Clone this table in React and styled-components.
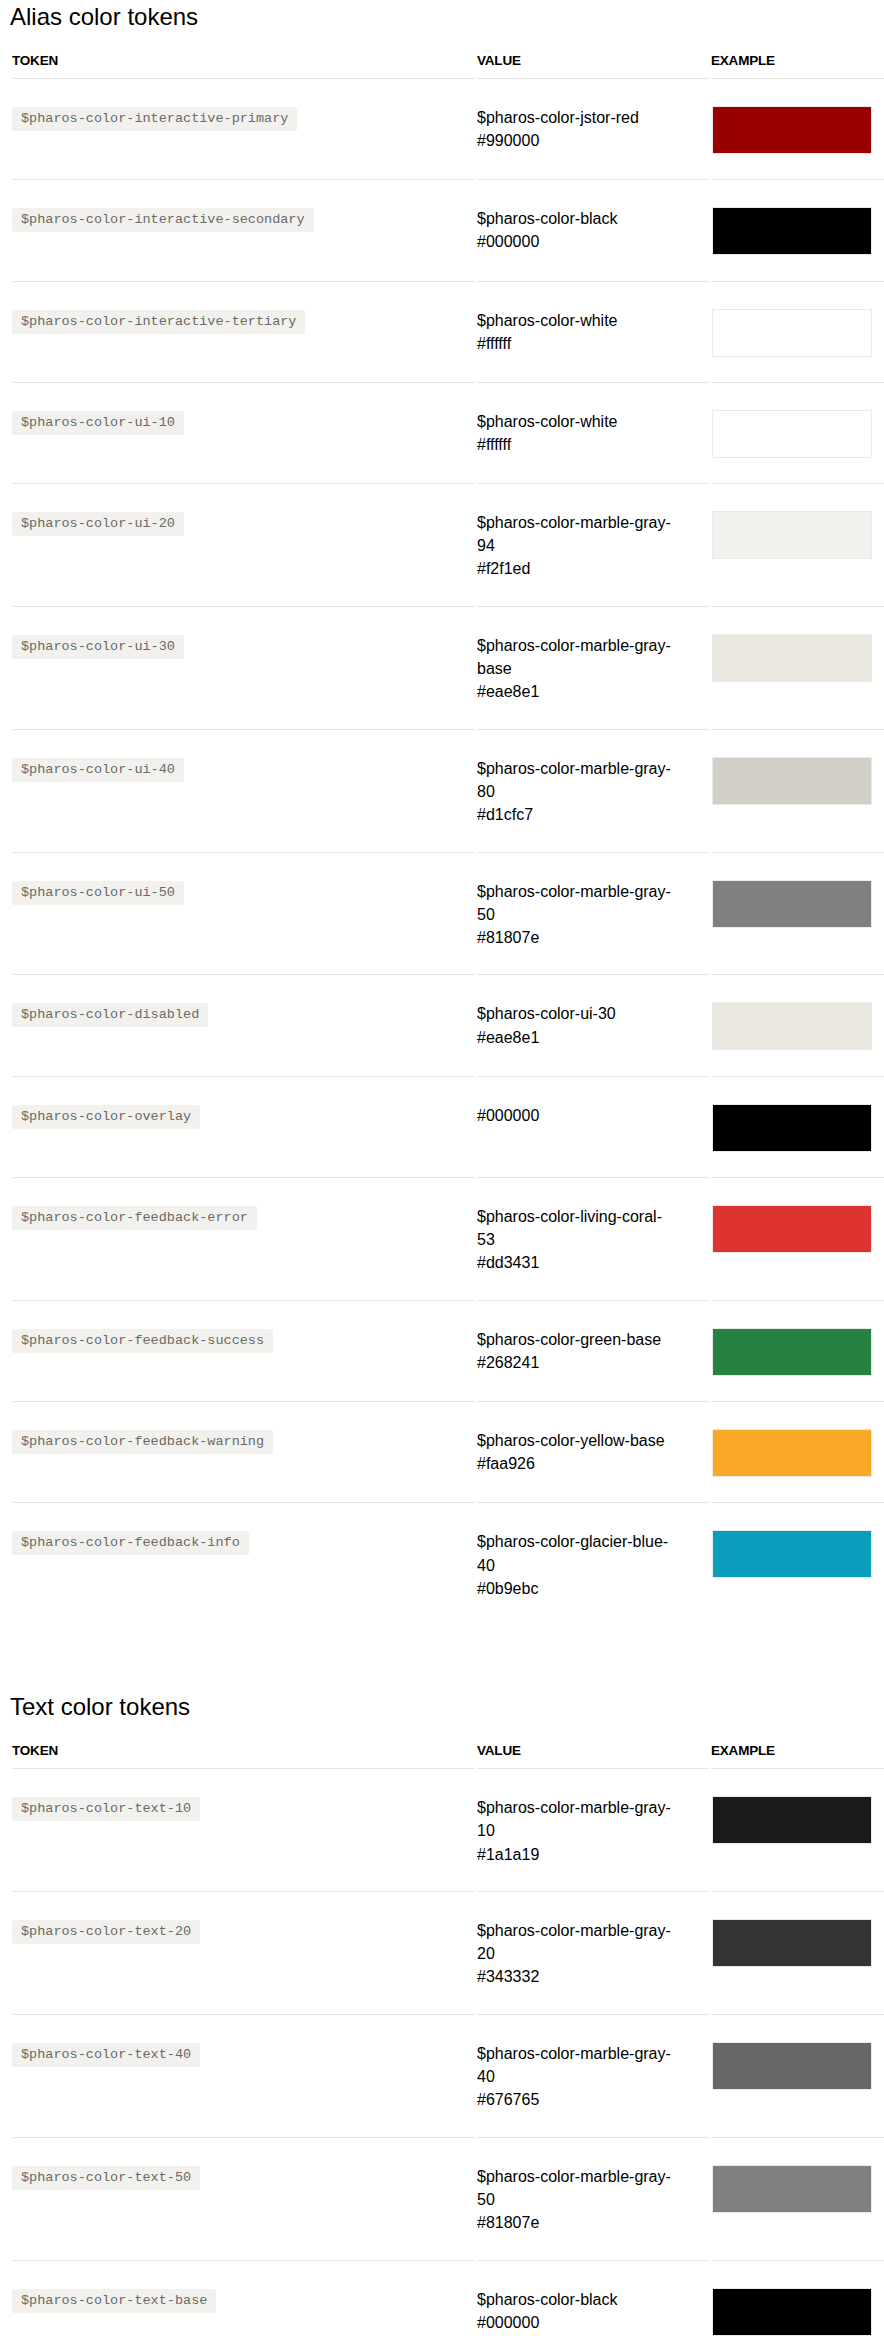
import React from 'react';
import styled, { createGlobalStyle } from 'styled-components';

const GlobalStyle = createGlobalStyle`
  html, body {
    margin: 0;
    padding: 0;
    background: #ffffff;
  }
  body {
    font-family: 'Liberation Sans', Arial, sans-serif;
    color: #000000;
    overflow-x: hidden;
  }
`;

const COLUMNS = '462px 231px 1fr';

const Page = styled.div`
  padding: 1px 0 0 10px;
`;

const Section = styled.section`
  margin: 0 0 66px;
`;

const Title = styled.h2`
  margin: 0 0 18px;
  font-size: 24px;
  line-height: 32px;
  font-weight: 400;
`;

const Table = styled.div`
  margin-left: 2px;
`;

const Row = styled.div`
  display: grid;
  grid-template-columns: ${COLUMNS};
  column-gap: 3px;

  &:last-child > div {
    border-bottom: none;
  }
`;

const HeadCell = styled.div`
  padding: 0 0 7px;
  border-bottom: 1px solid #e4e3df;
  font-size: 13.5px;
  line-height: 20px;
  font-weight: 700;
  letter-spacing: -0.2px;
  text-transform: uppercase;
`;

const Cell = styled.div`
  display: flex;
  flex-direction: column;
  align-items: flex-start;
  padding: 27px 0 25.25px;
  border-bottom: 1px solid #e4e3df;
  min-height: 48px;
`;

const Token = styled.code`
  display: inline-block;
  margin-top: 1px;
  padding: 4px 9px;
  background: #f2f1ed;
  color: #6a6a68;
  font-family: 'Liberation Mono', 'Courier New', monospace;
  font-size: 13.5px;
  line-height: 16px;
  white-space: nowrap;
  border-radius: 2px;
`;

const ValueLine = styled.div`
  font-size: 16px;
  line-height: 23.2px;
  white-space: nowrap;
`;

const Swatch = styled.div`
  box-sizing: border-box;
  width: 160px;
  height: 48px;
  margin-left: 1px;
  background: ${(p) => p.$color};
  border: 1px solid #ebeae6;
`;

const aliasTokens = [
  ['$pharos-color-interactive-primary', ['$pharos-color-jstor-red', '#990000'], '#990000'],
  ['$pharos-color-interactive-secondary', ['$pharos-color-black', '#000000'], '#000000'],
  ['$pharos-color-interactive-tertiary', ['$pharos-color-white', '#ffffff'], '#ffffff'],
  ['$pharos-color-ui-10', ['$pharos-color-white', '#ffffff'], '#ffffff'],
  ['$pharos-color-ui-20', ['$pharos-color-marble-gray-', '94', '#f2f1ed'], '#f2f1ed'],
  ['$pharos-color-ui-30', ['$pharos-color-marble-gray-', 'base', '#eae8e1'], '#eae8e1'],
  ['$pharos-color-ui-40', ['$pharos-color-marble-gray-', '80', '#d1cfc7'], '#d1cfc7'],
  ['$pharos-color-ui-50', ['$pharos-color-marble-gray-', '50', '#81807e'], '#81807e'],
  ['$pharos-color-disabled', ['$pharos-color-ui-30', '#eae8e1'], '#eae8e1'],
  ['$pharos-color-overlay', ['#000000'], '#000000'],
  ['$pharos-color-feedback-error', ['$pharos-color-living-coral-', '53', '#dd3431'], '#dd3431'],
  ['$pharos-color-feedback-success', ['$pharos-color-green-base', '#268241'], '#268241'],
  ['$pharos-color-feedback-warning', ['$pharos-color-yellow-base', '#faa926'], '#faa926'],
  ['$pharos-color-feedback-info', ['$pharos-color-glacier-blue-', '40', '#0b9ebc'], '#0b9ebc'],
];

const textTokens = [
  ['$pharos-color-text-10', ['$pharos-color-marble-gray-', '10', '#1a1a19'], '#1a1a19'],
  ['$pharos-color-text-20', ['$pharos-color-marble-gray-', '20', '#343332'], '#343332'],
  ['$pharos-color-text-40', ['$pharos-color-marble-gray-', '40', '#676765'], '#676765'],
  ['$pharos-color-text-50', ['$pharos-color-marble-gray-', '50', '#81807e'], '#81807e'],
  ['$pharos-color-text-base', ['$pharos-color-black', '#000000'], '#000000'],
];

const TokenTable = ({ title, rows }) => (
  <Section>
    <Title>{title}</Title>
    <Table>
      <Row>
        <HeadCell>Token</HeadCell>
        <HeadCell>Value</HeadCell>
        <HeadCell>Example</HeadCell>
      </Row>
      {rows.map(([token, value, color]) => (
        <Row key={token}>
          <Cell>
            <Token>{token}</Token>
          </Cell>
          <Cell>
            {value.map((line, i) => (
              <ValueLine key={i}>{line}</ValueLine>
            ))}
          </Cell>
          <Cell>
            <Swatch $color={color} />
          </Cell>
        </Row>
      ))}
    </Table>
  </Section>
);

export default function App() {
  return (
    <>
      <GlobalStyle />
      <Page>
        <TokenTable title="Alias color tokens" rows={aliasTokens} />
        <TokenTable title="Text color tokens" rows={textTokens} />
      </Page>
    </>
  );
}
